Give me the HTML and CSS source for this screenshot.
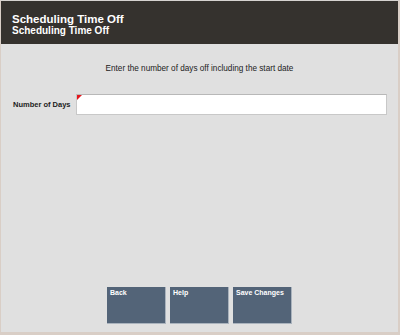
FILE: index.html
```html
<!DOCTYPE html>
<html lang="en">
<head>
    <meta charset="UTF-8">
    <meta name="viewport" content="width=device-width, initial-scale=1.0">
    <link rel="stylesheet" href="styles.css">
    <title>Scheduling Time Off</title>
</head>
<body>
    <div class="screen">
        <div class="top">
            <h1>Scheduling Time Off</h1>
            <h2>Scheduling Time Off</h2>
        </div>

        <div class="main">
            <p class="prompt">Enter the number of days off including the start date</p>

            <div class="field">
                <label class="field-label">Number of Days</label>
                <div class="field-input">
                    <span class="required"></span>
                    <input type="text">
                </div>
            </div>

            <div class="buttons">
                <button class="btn">Back</button>
                <button class="btn">Help</button>
                <button class="btn">Save Changes</button>
            </div>
        </div>
    </div>
</body>
</html>
```

FILE: styles.css
```css
body {
    margin: 0;
    font-family: 'Liberation Sans', Arial, sans-serif;
    background-color: #e6e2df;
}

.screen {
    width: 400px;
    height: 335px;
    box-sizing: border-box;
    display: flex;
    flex-direction: column;
    border-left: 1px solid #d9cec6;
    border-right: 2px solid #d9cec6;
    border-bottom: 3px solid #d9cec6;
    border-top: 1px solid #d6d3d0;
    background-color: #e0e0e0;
}

/* header */
.top {
    height: 43px;
    background-color: #35322e;
    color: #ffffff;
    padding: 12px 0 0 11px;
    box-sizing: border-box;
}

.top h1 {
    margin: 0;
    font-size: 11.5px;
    line-height: 12px;
}

.top h2 {
    margin: 0;
    font-size: 10px;
    line-height: 11px;
}

/* ____________________________________________________________ */
.main {
    flex: 1;
    display: flex;
    flex-direction: column;
}

.prompt {
    margin: 20px 0 0 0;
    text-align: center;
    font-size: 8.2px;
    color: #222222;
}

.field {
    display: flex;
    align-items: center;
    margin-top: 21px;
    padding-left: 12px;
}

.field-label {
    width: 63px;
    font-size: 7.5px;
    font-weight: bold;
    color: #222222;
}

.field-input {
    position: relative;
    width: 311px;
    height: 21px;
}

.field-input input {
    width: 100%;
    height: 100%;
    box-sizing: border-box;
    border: 1px solid #c8c8c8;
    border-top-color: #b8b8b8;
    background-color: #ffffff;
    margin: 0;
    padding: 0;
}

.required {
    position: absolute;
    left: 1px;
    top: 1px;
    width: 0;
    height: 0;
    border-top: 5px solid #e4161c;
    border-right: 5px solid transparent;
}

.buttons {
    margin-top: auto;
    margin-bottom: 8px;
    display: flex;
    gap: 4px;
    padding-left: 106px;
}

.btn {
    width: 59px;
    height: 37px;
    background-color: #536478;
    border: none;
    border-right: 1px solid #aab3bd;
    border-bottom: 1px solid #aab3bd;
    color: #ffffff;
    font-family: 'Liberation Sans', Arial, sans-serif;
    font-size: 7px;
    font-weight: bold;
    text-align: left;
    padding: 2px 3px;
    display: flex;
    align-items: flex-start;
}
```
